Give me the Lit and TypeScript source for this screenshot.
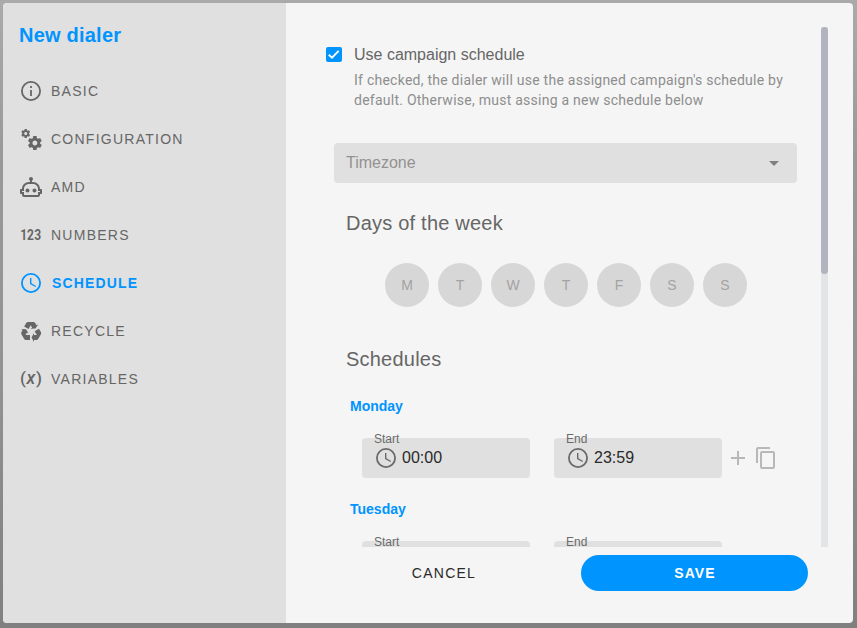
import { LitElement, html, css, svg } from "lit";
import { customElement, property } from "lit/decorators.js";
import { classMap } from "lit/directives/class-map.js";

const ICONS: Record<string, string> = {
  cogs: "M15.9,18.45C17.25,18.45 18.35,17.35 18.35,16C18.35,14.65 17.25,13.55 15.9,13.55C14.54,13.55 13.45,14.65 13.45,16C13.45,17.35 14.54,18.45 15.9,18.45M21.1,16.68L22.58,17.84C22.71,17.95 22.75,18.13 22.66,18.29L21.26,20.71C21.17,20.86 21,20.92 20.83,20.86L19.09,20.16C18.73,20.44 18.33,20.67 17.91,20.85L17.64,22.7C17.62,22.87 17.47,23 17.3,23H14.5C14.32,23 14.18,22.87 14.15,22.7L13.89,20.85C13.46,20.67 13.07,20.44 12.71,20.16L10.96,20.86C10.81,20.92 10.62,20.86 10.54,20.71L9.14,18.29C9.05,18.13 9.09,17.95 9.22,17.84L10.7,16.68L10.65,16L10.7,15.31L9.22,14.16C9.09,14.05 9.05,13.86 9.14,13.71L10.54,11.29C10.62,11.13 10.81,11.07 10.96,11.13L12.71,11.84C13.07,11.56 13.46,11.32 13.89,11.15L14.15,9.29C14.18,9.13 14.32,9 14.5,9H17.3C17.47,9 17.62,9.13 17.64,9.29L17.91,11.15C18.33,11.32 18.73,11.56 19.09,11.84L20.83,11.13C21,11.07 21.17,11.13 21.26,11.29L22.66,13.71C22.75,13.86 22.71,14.05 22.58,14.16L21.1,15.31L21.15,16L21.1,16.68M6.69,8.07C7.56,8.07 8.26,7.37 8.26,6.5C8.26,5.63 7.56,4.92 6.69,4.92A1.58,1.58 0 0,0 5.11,6.5C5.11,7.37 5.82,8.07 6.69,8.07M10.03,6.94L11,7.68C11.07,7.75 11.09,7.87 11.03,7.97L10.13,9.53C10.08,9.63 9.96,9.67 9.86,9.63L8.74,9.18L8,9.62L7.81,10.81C7.79,10.92 7.7,11 7.59,11H5.79C5.67,11 5.58,10.92 5.56,10.81L5.4,9.62L4.64,9.18L3.52,9.63C3.41,9.67 3.3,9.63 3.24,9.53L2.34,7.97C2.28,7.87 2.31,7.75 2.39,7.68L3.34,6.94L3.31,6.5L3.34,6.06L2.39,5.32C2.31,5.25 2.28,5.13 2.34,5.03L3.24,3.47C3.3,3.37 3.41,3.33 3.52,3.37L4.63,3.82L5.4,3.38L5.56,2.19C5.58,2.08 5.67,2 5.79,2H7.59C7.7,2 7.79,2.08 7.81,2.19L8,3.38L8.74,3.82L9.86,3.37C9.96,3.33 10.08,3.37 10.13,3.47L11.03,5.03C11.09,5.13 11.07,5.25 11,5.32L10.03,6.06L10.06,6.5L10.03,6.94Z",
  robot: "M17.5 15.5C17.5 16.61 16.61 17.5 15.5 17.5S13.5 16.61 13.5 15.5 14.4 13.5 15.5 13.5 17.5 14.4 17.5 15.5M8.5 13.5C7.4 13.5 6.5 14.4 6.5 15.5S7.4 17.5 8.5 17.5 10.5 16.61 10.5 15.5 9.61 13.5 8.5 13.5M23 15V18C23 18.55 22.55 19 22 19H21V20C21 21.11 20.11 22 19 22H5C3.9 22 3 21.11 3 20V19H2C1.45 19 1 18.55 1 18V15C1 14.45 1.45 14 2 14H3C3 10.13 6.13 7 10 7H11V5.73C10.4 5.39 10 4.74 10 4C10 2.9 10.9 2 12 2S14 2.9 14 4C14 4.74 13.6 5.39 13 5.73V7H14C17.87 7 21 10.13 21 14H22C22.55 14 23 14.45 23 15M21 16H19V14C19 11.24 16.76 9 14 9H10C7.24 9 5 11.24 5 14V16H3V17H5V20H19V17H21V16Z",
  recycle: "M21.82,15.42L19.32,19.75C18.83,20.61 17.92,21.06 17,21H15V23L12.5,18.5L15,14V16H17.82L15.6,12.15L19.93,9.65L21.73,12.77C22.25,13.54 22.32,14.57 21.82,15.42M9.21,3.06H14.21C15.19,3.06 16.04,3.63 16.45,4.45L17.45,6.19L19.18,5.19L16.54,9.6L11.39,9.69L13.12,8.69L11.71,6.24L9.5,10.09L5.16,7.59L6.96,4.47C7.37,3.64 8.22,3.06 9.21,3.06M5.05,19.76L2.55,15.43C2.06,14.58 2.13,13.56 2.64,12.79L3.64,11.06L1.91,10.06L7.05,10.14L9.7,14.56L7.97,13.56L6.56,16H11V21H7.4C6.47,21.07 5.55,20.61 5.05,19.76Z",
  copy: "M19,21H8V7H19M19,5H8A2,2 0 0,0 6,7V21A2,2 0 0,0 8,23H19A2,2 0 0,0 21,21V7A2,2 0 0,0 19,5M16,1H4A2,2 0 0,0 2,3V17H4V3H16V1Z",
  plus: "M19,13H13V19H11V13H5V11H11V5H13V11H19V13Z",
};

@customElement("ui-icon")
class UiIcon extends LitElement {
  @property() name = "";
  static styles = css`
    :host { display: block; width: 24px; height: 24px; flex: none; }
    svg { display: block; width: 100%; height: 100%; fill: currentColor; }
    .ring { fill: none; stroke: currentColor; stroke-width: 1.8; }
    .hand { fill: none; stroke: currentColor; stroke-width: 1.4; }
    .digits { font: 700 14px Roboto, sans-serif; }
    .var { font: italic 500 18px Roboto, sans-serif; }
    .paren { font: 500 17px Roboto, sans-serif; }
  `;
  render() {
    switch (this.name) {
      case "numeric":
        return html`<svg viewBox="0 0 24 24"><g transform="scale(0.86 1)"><text class="digits" x="1.4 9.4 17.6" y="17">123</text></g></svg>`;
      case "variable":
        return html`<svg viewBox="0 0 24 24">
          <text class="paren" x="1" y="17">(</text><text class="var" x="7.4" y="17">x</text><text class="paren" x="17" y="17">)</text>
        </svg>`;
      case "clock":
        return html`<svg viewBox="0 0 24 24"><circle class="ring" cx="12" cy="12" r="9.1"></circle><path class="hand" d="M11.7 7v5.6l5 2.9"></path></svg>`;
      case "info":
        return html`<svg viewBox="0 0 24 24"><circle class="ring" cx="12" cy="12" r="9.1"></circle><path d="M11.1 11h1.8v6h-1.8zM11.1 7h1.8v1.9h-1.8z"></path></svg>`;
      default:
        return html`<svg viewBox="0 0 24 24">${svg`<path d=${ICONS[this.name]}></path>`}</svg>`;
    }
  }
}

@customElement("time-field")
class TimeField extends LitElement {
  @property() label = "";
  @property() value = "";
  static styles = css`
    :host {
      display: block; position: relative; box-sizing: border-box;
      width: 168px; height: 40px; border-radius: 4px; background: #e0e0e0;
    }
    .label {
      position: absolute; left: 12px; top: -7.4px; color: #6b6b6b;
      font: 12px/16px "Liberation Sans", Arial, sans-serif; letter-spacing: 0;
    }
    .row { display: flex; align-items: center; height: 40px; padding-left: 12px; gap: 4px; color: #6a6a6a; }
    .value { font: 16px/20px "Liberation Sans", Arial, sans-serif; color: #2a2a2a; }
  `;
  render() {
    return html`<div class="row"><ui-icon name="clock"></ui-icon><span class="value">${this.value}</span></div>
      <span class="label">${this.label}</span>`;
  }
}

@customElement("app-root")
class AppRoot extends LitElement {
  private menu = [
    ["info", "BASIC"], ["cogs", "CONFIGURATION"], ["robot", "AMD"], ["numeric", "NUMBERS"],
    ["clock", "SCHEDULE"], ["recycle", "RECYCLE"], ["variable", "VARIABLES"],
  ];
  static styles = css`
    :host {
      display: block; box-sizing: border-box; height: 628px; padding: 3px 4px 5px 3px;
      background: linear-gradient(#aaa 0, #999 25%, #929292 60%, #808080 100%);
      font-family: "Liberation Sans", Arial, sans-serif; overflow: hidden;
    }
    .dialog { display: flex; height: 620px; border-radius: 4px; overflow: hidden; background: #f5f5f5; }
    .side { width: 283px; background: #e0e0e0; flex: none; }
    .title { margin: 16px 0 16px 16px; font: 700 20px/32px "Liberation Sans", Arial, sans-serif; letter-spacing: 0.22px; color: #0094ff; }
    .item {
      display: flex; align-items: center; height: 48px; padding-left: 16px; gap: 8px;
      font-size: 14px; letter-spacing: 1.25px; color: #666;
    }
    .item.active { color: #0094ff; font-weight: 700; gap: 9px; letter-spacing: 1.15px; }
    .main { flex: 1; display: flex; flex-direction: column; padding: 24px 25px 0 40px; }
    .scroller { height: 520px; display: flex; justify-content: space-between; overflow: hidden; }
    .content { width: 471px; }
    .track { width: 7px; height: 520px; background: #e3e4e5; }
    .thumb { height: 247px; border-radius: 4px; background: #b1b4be; }
    .check { display: flex; padding-top: 18px; }
    .box { width: 15.6px; height: 15px; margin-top: 2px; border-radius: 2px; background: #0094ff; flex: none; }
    .box svg { display: block; width: 100%; height: 15px; }
    .text { margin-left: 12.4px; }
    .check-label { font-size: 16px; line-height: 20px; color: #666; white-space: nowrap; }
    .hint { margin-top: 5px; font: 14px/20px Roboto, sans-serif; letter-spacing: 0.25px; color: #8e8e8e; white-space: nowrap; }
    .select {
      display: flex; align-items: center; justify-content: space-between; box-sizing: border-box;
      width: 463px; height: 40px; margin: 33px 0 0 8px; padding: 0 18.5px 0 12px;
      border-radius: 4px; background: #e0e0e0; color: #929292; font-size: 16px;
    }
    .arrow { border: 5px solid transparent; border-top-color: #808080; border-bottom: 0; margin-top: 1px; }
    h2 { margin: 0 0 0 20px; font-weight: 400; font-size: 20px; line-height: 32px; letter-spacing: 0.22px; color: #666; }
    .days-title { margin-top: 24px; }
    .days { display: flex; gap: 9px; margin: 24px 0 36px 59px; }
    .day {
      width: 44px; height: 44px; border-radius: 50%; background: #d7d7d7; color: #a3a3a3;
      font-size: 14px; line-height: 44px; text-align: center;
    }
    .sched { height: 103.5px; }
    .name { padding: 22.6px 0 0 24px; font: 700 14px/16px "Liberation Sans", Arial, sans-serif; color: #0094ff; }
    .fields { display: flex; align-items: center; margin: 24.4px 0 0 36px; color: #b8b8b8; }
    .end { margin-left: 24px; }
    .plus, .copy { margin-left: 4px; }
    .actions { display: flex; align-items: center; padding: 8px 20px 0 8px; height: 36px; }
    .cancel, .save { border: 0; height: 36px; font: 14px "Liberation Sans", Arial, sans-serif; letter-spacing: 1.25px; }
    .cancel { width: 220px; background: none; color: #2a2a2a; margin-right: 27px; padding: 0; }
    .save { width: 227px; flex: none; border-radius: 18px; background: #0094ff; color: #fff; font-weight: 700; padding: 0 0 0 1px; letter-spacing: 1.1px; }
  `;
  private schedule(name: string, start: string, end: string) {
    return html`<section class="sched">
      <div class="name">${name}</div>
      <div class="fields">
        <time-field label="Start" value=${start}></time-field>
        <time-field class="end" label="End" value=${end}></time-field>
        <ui-icon class="plus" name="plus"></ui-icon>
        <ui-icon class="copy" name="copy"></ui-icon>
      </div>
    </section>`;
  }
  render() {
    return html`<div class="dialog">
      <nav class="side">
        <div class="title">New dialer</div>
        ${this.menu.map(([icon, label]) => html`
          <div class=${classMap({ item: true, active: label === "SCHEDULE" })}>
            <ui-icon name=${icon}></ui-icon><span>${label}</span>
          </div>`)}
      </nav>
      <main class="main">
        <div class="scroller">
          <div class="content">
            <div class="check">
              <div class="box"><svg viewBox="0 0 16 16"><path d="M2.6 8.2 6.1 11.4 13.2 4.2" fill="none" stroke="#fff" stroke-width="2"></path></svg></div>
              <div class="text">
                <div class="check-label">Use campaign schedule</div>
                <div class="hint">If checked, the dialer will use the assigned campaign's schedule by<br>default. Otherwise, must assing a new schedule below</div>
              </div>
            </div>
            <div class="select"><span>Timezone</span><span class="arrow"></span></div>
            <h2 class="days-title">Days of the week</h2>
            <div class="days">${["M", "T", "W", "T", "F", "S", "S"].map((d) => html`<div class="day">${d}</div>`)}</div>
            <h2>Schedules</h2>
            ${this.schedule("Monday", "00:00", "23:59")}
            ${this.schedule("Tuesday", "", "")}
          </div>
          <div class="track"><div class="thumb"></div></div>
        </div>
        <div class="actions">
          <button class="cancel">CANCEL</button>
          <button class="save">SAVE</button>
        </div>
      </main>
    </div>`;
  }
}
